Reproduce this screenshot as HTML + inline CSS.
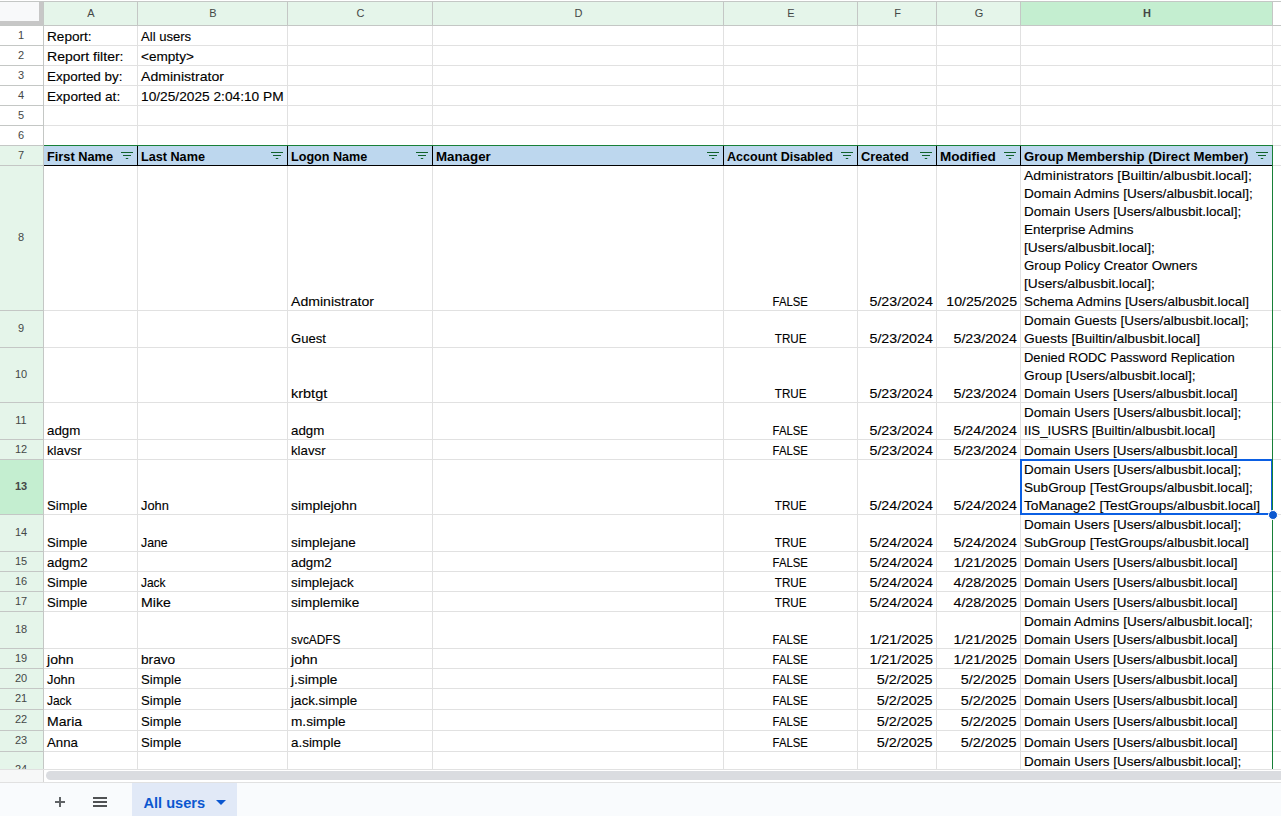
<!DOCTYPE html>
<html><head><meta charset="utf-8"><style>
html,body{margin:0;padding:0;background:#fff;}
body{width:1281px;height:816px;position:relative;overflow:hidden;font-family:"Liberation Sans", sans-serif;}
body>div{position:absolute;}
.t{font-size:13px;line-height:18px;height:18px;white-space:pre;color:#000;-webkit-text-stroke:0.12px #000;}
span{display:inline-block;}
.h{font-size:11px;line-height:18px;height:18px;white-space:pre;color:#444746;}
.tab{font-size:14.6px;font-weight:bold;color:#0b57d0;line-height:18px;white-space:pre;}
</style></head><body>
<div style="left:0px;top:1px;width:1281px;height:1px;background:#c4c7c5;"></div>
<div style="left:44px;top:2px;width:1228px;height:23px;background:#e5f5ea;"></div>
<div style="left:1021px;top:2px;width:251px;height:23px;background:#c4eed0;"></div>
<div style="left:0px;top:2px;width:39px;height:19px;background:#f8f9fa;"></div>
<div style="left:39px;top:2px;width:4px;height:23px;background:#c7c7c7;"></div>
<div style="left:0px;top:21px;width:43px;height:4px;background:#c7c7c7;"></div>
<div style="left:0px;top:25px;width:1281px;height:1px;background:#c4c7c5;"></div>
<div style="left:0px;top:146px;width:43px;height:623px;background:#e5f5ea;"></div>
<div style="left:0px;top:460px;width:43px;height:54px;background:#c4eed0;"></div>
<div style="left:0px;top:45px;width:43px;height:1px;background:#c4c7c5;"></div>
<div style="left:44px;top:45px;width:1237px;height:1px;background:#e1e1e1;"></div>
<div style="left:0px;top:65px;width:43px;height:1px;background:#c4c7c5;"></div>
<div style="left:44px;top:65px;width:1237px;height:1px;background:#e1e1e1;"></div>
<div style="left:0px;top:85px;width:43px;height:1px;background:#c4c7c5;"></div>
<div style="left:44px;top:85px;width:1237px;height:1px;background:#e1e1e1;"></div>
<div style="left:0px;top:105px;width:43px;height:1px;background:#c4c7c5;"></div>
<div style="left:44px;top:105px;width:1237px;height:1px;background:#e1e1e1;"></div>
<div style="left:0px;top:125px;width:43px;height:1px;background:#c4c7c5;"></div>
<div style="left:44px;top:125px;width:1237px;height:1px;background:#e1e1e1;"></div>
<div style="left:0px;top:145px;width:43px;height:1px;background:#c4c7c5;"></div>
<div style="left:44px;top:145px;width:1237px;height:1px;background:#e1e1e1;"></div>
<div style="left:0px;top:165px;width:43px;height:1px;background:#c4c7c5;"></div>
<div style="left:44px;top:165px;width:1237px;height:1px;background:#e1e1e1;"></div>
<div style="left:0px;top:310px;width:43px;height:1px;background:#c4c7c5;"></div>
<div style="left:44px;top:310px;width:1237px;height:1px;background:#e1e1e1;"></div>
<div style="left:0px;top:347px;width:43px;height:1px;background:#c4c7c5;"></div>
<div style="left:44px;top:347px;width:1237px;height:1px;background:#e1e1e1;"></div>
<div style="left:0px;top:402px;width:43px;height:1px;background:#c4c7c5;"></div>
<div style="left:44px;top:402px;width:1237px;height:1px;background:#e1e1e1;"></div>
<div style="left:0px;top:439px;width:43px;height:1px;background:#c4c7c5;"></div>
<div style="left:44px;top:439px;width:1237px;height:1px;background:#e1e1e1;"></div>
<div style="left:0px;top:459px;width:43px;height:1px;background:#c4c7c5;"></div>
<div style="left:44px;top:459px;width:1237px;height:1px;background:#e1e1e1;"></div>
<div style="left:0px;top:514px;width:43px;height:1px;background:#c4c7c5;"></div>
<div style="left:44px;top:514px;width:1237px;height:1px;background:#e1e1e1;"></div>
<div style="left:0px;top:551px;width:43px;height:1px;background:#c4c7c5;"></div>
<div style="left:44px;top:551px;width:1237px;height:1px;background:#e1e1e1;"></div>
<div style="left:0px;top:571px;width:43px;height:1px;background:#c4c7c5;"></div>
<div style="left:44px;top:571px;width:1237px;height:1px;background:#e1e1e1;"></div>
<div style="left:0px;top:591px;width:43px;height:1px;background:#c4c7c5;"></div>
<div style="left:44px;top:591px;width:1237px;height:1px;background:#e1e1e1;"></div>
<div style="left:0px;top:611px;width:43px;height:1px;background:#c4c7c5;"></div>
<div style="left:44px;top:611px;width:1237px;height:1px;background:#e1e1e1;"></div>
<div style="left:0px;top:648px;width:43px;height:1px;background:#c4c7c5;"></div>
<div style="left:44px;top:648px;width:1237px;height:1px;background:#e1e1e1;"></div>
<div style="left:0px;top:668px;width:43px;height:1px;background:#c4c7c5;"></div>
<div style="left:44px;top:668px;width:1237px;height:1px;background:#e1e1e1;"></div>
<div style="left:0px;top:688px;width:43px;height:1px;background:#c4c7c5;"></div>
<div style="left:44px;top:688px;width:1237px;height:1px;background:#e1e1e1;"></div>
<div style="left:0px;top:709px;width:43px;height:1px;background:#c4c7c5;"></div>
<div style="left:44px;top:709px;width:1237px;height:1px;background:#e1e1e1;"></div>
<div style="left:0px;top:730px;width:43px;height:1px;background:#c4c7c5;"></div>
<div style="left:44px;top:730px;width:1237px;height:1px;background:#e1e1e1;"></div>
<div style="left:0px;top:751px;width:43px;height:1px;background:#c4c7c5;"></div>
<div style="left:44px;top:751px;width:1237px;height:1px;background:#e1e1e1;"></div>
<div style="left:43px;top:2px;width:1px;height:767px;background:#c4c7c5;"></div>
<div style="left:137px;top:2px;width:1px;height:23px;background:#c4c7c5;"></div>
<div style="left:137px;top:26px;width:1px;height:743px;background:#e1e1e1;"></div>
<div style="left:287px;top:2px;width:1px;height:23px;background:#c4c7c5;"></div>
<div style="left:287px;top:26px;width:1px;height:743px;background:#e1e1e1;"></div>
<div style="left:432px;top:2px;width:1px;height:23px;background:#c4c7c5;"></div>
<div style="left:432px;top:26px;width:1px;height:743px;background:#e1e1e1;"></div>
<div style="left:723px;top:2px;width:1px;height:23px;background:#c4c7c5;"></div>
<div style="left:723px;top:26px;width:1px;height:743px;background:#e1e1e1;"></div>
<div style="left:857px;top:2px;width:1px;height:23px;background:#c4c7c5;"></div>
<div style="left:857px;top:26px;width:1px;height:743px;background:#e1e1e1;"></div>
<div style="left:936px;top:2px;width:1px;height:23px;background:#c4c7c5;"></div>
<div style="left:936px;top:26px;width:1px;height:743px;background:#e1e1e1;"></div>
<div style="left:1020px;top:2px;width:1px;height:23px;background:#c4c7c5;"></div>
<div style="left:1020px;top:26px;width:1px;height:743px;background:#e1e1e1;"></div>
<div style="left:1272px;top:2px;width:1px;height:23px;background:#c4c7c5;"></div>
<div style="left:1272px;top:26px;width:1px;height:743px;background:#e1e1e1;"></div>
<div style="left:0px;top:769px;width:1281px;height:1px;background:#e1e1e1;"></div>
<div style="left:44px;top:146px;width:1228px;height:19px;background:#bdd7ee;"></div>
<div style="left:44px;top:145px;width:1229px;height:1px;background:#188038;"></div>
<div style="left:44px;top:165px;width:1229px;height:1px;background:#000;"></div>
<div style="left:137px;top:146px;width:1px;height:19px;background:#000;"></div>
<div style="left:287px;top:146px;width:1px;height:19px;background:#000;"></div>
<div style="left:432px;top:146px;width:1px;height:19px;background:#000;"></div>
<div style="left:723px;top:146px;width:1px;height:19px;background:#000;"></div>
<div style="left:857px;top:146px;width:1px;height:19px;background:#000;"></div>
<div style="left:936px;top:146px;width:1px;height:19px;background:#000;"></div>
<div style="left:1020px;top:146px;width:1px;height:19px;background:#000;"></div>
<svg style="position:absolute;left:121px;top:151px" width="12" height="9" viewBox="0 0 12 9"><path d="M0 1.5h12M2 4.5h8M4.8 7.5h2.4" stroke="#11612b" stroke-width="1.2"/></svg>
<svg style="position:absolute;left:271px;top:151px" width="12" height="9" viewBox="0 0 12 9"><path d="M0 1.5h12M2 4.5h8M4.8 7.5h2.4" stroke="#11612b" stroke-width="1.2"/></svg>
<svg style="position:absolute;left:416px;top:151px" width="12" height="9" viewBox="0 0 12 9"><path d="M0 1.5h12M2 4.5h8M4.8 7.5h2.4" stroke="#11612b" stroke-width="1.2"/></svg>
<svg style="position:absolute;left:707px;top:151px" width="12" height="9" viewBox="0 0 12 9"><path d="M0 1.5h12M2 4.5h8M4.8 7.5h2.4" stroke="#11612b" stroke-width="1.2"/></svg>
<svg style="position:absolute;left:841px;top:151px" width="12" height="9" viewBox="0 0 12 9"><path d="M0 1.5h12M2 4.5h8M4.8 7.5h2.4" stroke="#11612b" stroke-width="1.2"/></svg>
<svg style="position:absolute;left:920px;top:151px" width="12" height="9" viewBox="0 0 12 9"><path d="M0 1.5h12M2 4.5h8M4.8 7.5h2.4" stroke="#11612b" stroke-width="1.2"/></svg>
<svg style="position:absolute;left:1004px;top:151px" width="12" height="9" viewBox="0 0 12 9"><path d="M0 1.5h12M2 4.5h8M4.8 7.5h2.4" stroke="#11612b" stroke-width="1.2"/></svg>
<svg style="position:absolute;left:1256px;top:151px" width="12" height="9" viewBox="0 0 12 9"><path d="M0 1.5h12M2 4.5h8M4.8 7.5h2.4" stroke="#11612b" stroke-width="1.2"/></svg>
<div style="left:1020px;top:459px;width:253px;height:56px;box-sizing:border-box;border:2px solid #0b5fe3;background:transparent"></div>
<div style="left:1272px;top:145px;width:1px;height:624px;background:#188038;"></div>
<div style="left:1268px;top:510px;width:10px;height:10px;border-radius:50%;background:#0b57d0;border:1px solid #fff;box-sizing:border-box"></div>
<div style="left:0;top:752px;width:43px;height:17px;overflow:hidden"><div class="h" style="position:absolute;left:-279px;top:7.5px;width:600px;text-align:center">24</div></div>
<div style="left:0px;top:770px;width:43px;height:12px;background:#f7f8f8;"></div>
<div style="left:43px;top:770px;width:1px;height:12px;background:#d5d5d5;"></div>
<div style="left:44px;top:770px;width:1237px;height:12px;background:#fff;"></div>
<div style="left:46px;top:771px;width:1300px;height:9px;border-radius:5px;background:#dadce0"></div>
<div style="left:0px;top:782px;width:1281px;height:1px;background:#e1e1e1;"></div>
<div style="left:0px;top:783px;width:1281px;height:33px;background:#f9fbfd;"></div>
<div style="left:55px;top:801px;width:10px;height:2px;background:#606366;"></div>
<div style="left:59px;top:797px;width:2px;height:10px;background:#606366;"></div>
<div style="left:93px;top:797px;width:14px;height:2px;background:#505254;"></div>
<div style="left:93px;top:801px;width:14px;height:2px;background:#505254;"></div>
<div style="left:93px;top:805px;width:14px;height:2px;background:#505254;"></div>
<div style="left:132px;top:783px;width:105px;height:33px;background:#e1e9f7;"></div>
<div class="tab" style="left:143.5px;top:793.5px;">All users</div>
<svg style="position:absolute;left:216px;top:800px" width="10" height="5" viewBox="0 0 10 5"><path d="M0 0h10L5 5z" fill="#0b57d0"/></svg>
<div class="h" style="left:-209.00px;top:4px;width:600px;text-align:center;color:#444746;">A</div>
<div class="h" style="left:-87.00px;top:4px;width:600px;text-align:center;color:#444746;">B</div>
<div class="h" style="left:60.50px;top:4px;width:600px;text-align:center;color:#444746;">C</div>
<div class="h" style="left:278.50px;top:4px;width:600px;text-align:center;color:#444746;">D</div>
<div class="h" style="left:491.00px;top:4px;width:600px;text-align:center;color:#444746;">E</div>
<div class="h" style="left:597.50px;top:4px;width:600px;text-align:center;color:#444746;">F</div>
<div class="h" style="left:679.00px;top:4px;width:600px;text-align:center;color:#444746;">G</div>
<div class="h" style="left:847.00px;top:4px;width:600px;text-align:center;font-weight:bold;-webkit-text-stroke:0;color:#444746;">H</div>
<div class="h" style="left:-279.00px;top:25.5px;width:600px;text-align:center;color:#444746;">1</div>
<div class="h" style="left:-279.00px;top:45.5px;width:600px;text-align:center;color:#444746;">2</div>
<div class="h" style="left:-279.00px;top:65.5px;width:600px;text-align:center;color:#444746;">3</div>
<div class="h" style="left:-279.00px;top:85.5px;width:600px;text-align:center;color:#444746;">4</div>
<div class="h" style="left:-279.00px;top:105.5px;width:600px;text-align:center;color:#444746;">5</div>
<div class="h" style="left:-279.00px;top:125.5px;width:600px;text-align:center;color:#444746;">6</div>
<div class="h" style="left:-279.00px;top:145.5px;width:600px;text-align:center;color:#444746;">7</div>
<div class="h" style="left:-279.00px;top:228.0px;width:600px;text-align:center;color:#444746;">8</div>
<div class="h" style="left:-279.00px;top:319.0px;width:600px;text-align:center;color:#444746;">9</div>
<div class="h" style="left:-279.00px;top:365.0px;width:600px;text-align:center;color:#444746;">10</div>
<div class="h" style="left:-279.00px;top:411.0px;width:600px;text-align:center;color:#444746;">11</div>
<div class="h" style="left:-279.00px;top:439.5px;width:600px;text-align:center;color:#444746;">12</div>
<div class="h" style="left:-279.00px;top:477.0px;width:600px;text-align:center;font-weight:bold;-webkit-text-stroke:0;color:#444746;">13</div>
<div class="h" style="left:-279.00px;top:523.0px;width:600px;text-align:center;color:#444746;">14</div>
<div class="h" style="left:-279.00px;top:551.5px;width:600px;text-align:center;color:#444746;">15</div>
<div class="h" style="left:-279.00px;top:571.5px;width:600px;text-align:center;color:#444746;">16</div>
<div class="h" style="left:-279.00px;top:591.5px;width:600px;text-align:center;color:#444746;">17</div>
<div class="h" style="left:-279.00px;top:620.0px;width:600px;text-align:center;color:#444746;">18</div>
<div class="h" style="left:-279.00px;top:648.5px;width:600px;text-align:center;color:#444746;">19</div>
<div class="h" style="left:-279.00px;top:668.5px;width:600px;text-align:center;color:#444746;">20</div>
<div class="h" style="left:-279.00px;top:689.0px;width:600px;text-align:center;color:#444746;">21</div>
<div class="h" style="left:-279.00px;top:710.0px;width:600px;text-align:center;color:#444746;">22</div>
<div class="h" style="left:-279.00px;top:731.0px;width:600px;text-align:center;color:#444746;">23</div>
<div class="t" style="left:47.00px;top:148px;width:600px;text-align:left;font-weight:bold;-webkit-text-stroke:0;"><span style="transform:scaleX(0.9823);transform-origin:left">First Name</span></div>
<div class="t" style="left:141.00px;top:148px;width:600px;text-align:left;font-weight:bold;-webkit-text-stroke:0;"><span style="transform:scaleX(0.9721);transform-origin:left">Last Name</span></div>
<div class="t" style="left:291.00px;top:148px;width:600px;text-align:left;font-weight:bold;-webkit-text-stroke:0;"><span style="transform:scaleX(0.9696);transform-origin:left">Logon Name</span></div>
<div class="t" style="left:436.00px;top:148px;width:600px;text-align:left;font-weight:bold;-webkit-text-stroke:0;"><span style="transform:scaleX(1.0234);transform-origin:left">Manager</span></div>
<div class="t" style="left:727.00px;top:148px;width:600px;text-align:left;font-weight:bold;-webkit-text-stroke:0;"><span style="transform:scaleX(0.9643);transform-origin:left">Account Disabled</span></div>
<div class="t" style="left:861.00px;top:148px;width:600px;text-align:left;font-weight:bold;-webkit-text-stroke:0;"><span style="transform:scaleX(0.9899);transform-origin:left">Created</span></div>
<div class="t" style="left:940.00px;top:148px;width:600px;text-align:left;font-weight:bold;-webkit-text-stroke:0;"><span style="transform:scaleX(1.0422);transform-origin:left">Modified</span></div>
<div class="t" style="left:1024.00px;top:148px;width:600px;text-align:left;font-weight:bold;-webkit-text-stroke:0;"><span style="transform:scaleX(1.0115);transform-origin:left">Group Membership (Direct Member)</span></div>
<div class="t" style="left:47.00px;top:28px;width:600px;text-align:left;"><span style="transform:scaleX(1.0474);transform-origin:left">Report:</span></div>
<div class="t" style="left:141.00px;top:28px;width:600px;text-align:left;"><span style="transform:scaleX(1.0058);transform-origin:left">All users</span></div>
<div class="t" style="left:47.00px;top:48px;width:600px;text-align:left;"><span style="transform:scaleX(1.0808);transform-origin:left">Report filter:</span></div>
<div class="t" style="left:141.00px;top:48px;width:600px;text-align:left;"><span style="transform:scaleX(1.0454);transform-origin:left">&lt;empty&gt;</span></div>
<div class="t" style="left:47.00px;top:68px;width:600px;text-align:left;"><span style="transform:scaleX(1.0351);transform-origin:left">Exported by:</span></div>
<div class="t" style="left:141.00px;top:68px;width:600px;text-align:left;"><span style="transform:scaleX(1.0827);transform-origin:left">Administrator</span></div>
<div class="t" style="left:47.00px;top:88px;width:600px;text-align:left;"><span style="transform:scaleX(1.0435);transform-origin:left">Exported at:</span></div>
<div class="t" style="left:141.00px;top:88px;width:600px;text-align:left;"><span style="transform:scaleX(1.0550);transform-origin:left">10/25/2025 2:04:10 PM</span></div>
<div class="t" style="left:291.00px;top:293px;width:600px;text-align:left;"><span style="transform:scaleX(1.0827);transform-origin:left">Administrator</span></div>
<div class="t" style="left:490.50px;top:293px;width:600px;text-align:center;"><span style="transform:scaleX(0.8716);transform-origin:center">FALSE</span></div>
<div class="t" style="left:333.00px;top:293px;width:600px;text-align:right;"><span style="transform:scaleX(1.0956);transform-origin:right">5/23/2024</span></div>
<div class="t" style="left:417.00px;top:293px;width:600px;text-align:right;"><span style="transform:scaleX(1.0881);transform-origin:right">10/25/2025</span></div>
<div class="t" style="left:1024.00px;top:167px;width:600px;text-align:left;"><span style="transform:scaleX(1.0765);transform-origin:left">Administrators [Builtin/albusbit.local];</span></div>
<div class="t" style="left:1024.00px;top:185px;width:600px;text-align:left;"><span style="transform:scaleX(1.0483);transform-origin:left">Domain Admins [Users/albusbit.local];</span></div>
<div class="t" style="left:1024.00px;top:203px;width:600px;text-align:left;"><span style="transform:scaleX(1.0372);transform-origin:left">Domain Users [Users/albusbit.local];</span></div>
<div class="t" style="left:1024.00px;top:221px;width:600px;text-align:left;"><span style="transform:scaleX(1.0375);transform-origin:left">Enterprise Admins</span></div>
<div class="t" style="left:1024.00px;top:239px;width:600px;text-align:left;"><span style="transform:scaleX(1.0588);transform-origin:left">[Users/albusbit.local];</span></div>
<div class="t" style="left:1024.00px;top:257px;width:600px;text-align:left;"><span style="transform:scaleX(1.0215);transform-origin:left">Group Policy Creator Owners</span></div>
<div class="t" style="left:1024.00px;top:275px;width:600px;text-align:left;"><span style="transform:scaleX(1.0588);transform-origin:left">[Users/albusbit.local];</span></div>
<div class="t" style="left:1024.00px;top:293px;width:600px;text-align:left;"><span style="transform:scaleX(1.0342);transform-origin:left">Schema Admins [Users/albusbit.local]</span></div>
<div class="t" style="left:291.00px;top:330px;width:600px;text-align:left;"><span style="transform:scaleX(1.0063);transform-origin:left">Guest</span></div>
<div class="t" style="left:490.50px;top:330px;width:600px;text-align:center;"><span style="transform:scaleX(0.8952);transform-origin:center">TRUE</span></div>
<div class="t" style="left:333.00px;top:330px;width:600px;text-align:right;"><span style="transform:scaleX(1.0956);transform-origin:right">5/23/2024</span></div>
<div class="t" style="left:417.00px;top:330px;width:600px;text-align:right;"><span style="transform:scaleX(1.0956);transform-origin:right">5/23/2024</span></div>
<div class="t" style="left:1024.00px;top:312px;width:600px;text-align:left;"><span style="transform:scaleX(1.0365);transform-origin:left">Domain Guests [Users/albusbit.local];</span></div>
<div class="t" style="left:1024.00px;top:330px;width:600px;text-align:left;"><span style="transform:scaleX(1.0587);transform-origin:left">Guests [Builtin/albusbit.local]</span></div>
<div class="t" style="left:291.00px;top:385px;width:600px;text-align:left;"><span style="transform:scaleX(1.1142);transform-origin:left">krbtgt</span></div>
<div class="t" style="left:490.50px;top:385px;width:600px;text-align:center;"><span style="transform:scaleX(0.8952);transform-origin:center">TRUE</span></div>
<div class="t" style="left:333.00px;top:385px;width:600px;text-align:right;"><span style="transform:scaleX(1.0956);transform-origin:right">5/23/2024</span></div>
<div class="t" style="left:417.00px;top:385px;width:600px;text-align:right;"><span style="transform:scaleX(1.0956);transform-origin:right">5/23/2024</span></div>
<div class="t" style="left:1024.00px;top:349px;width:600px;text-align:left;"><span style="transform:scaleX(0.9949);transform-origin:left">Denied RODC Password Replication</span></div>
<div class="t" style="left:1024.00px;top:367px;width:600px;text-align:left;"><span style="transform:scaleX(1.0511);transform-origin:left">Group [Users/albusbit.local];</span></div>
<div class="t" style="left:1024.00px;top:385px;width:600px;text-align:left;"><span style="transform:scaleX(1.0364);transform-origin:left">Domain Users [Users/albusbit.local]</span></div>
<div class="t" style="left:47.00px;top:422px;width:600px;text-align:left;"><span style="transform:scaleX(1.0253);transform-origin:left">adgm</span></div>
<div class="t" style="left:291.00px;top:422px;width:600px;text-align:left;"><span style="transform:scaleX(1.0253);transform-origin:left">adgm</span></div>
<div class="t" style="left:490.50px;top:422px;width:600px;text-align:center;"><span style="transform:scaleX(0.8716);transform-origin:center">FALSE</span></div>
<div class="t" style="left:333.00px;top:422px;width:600px;text-align:right;"><span style="transform:scaleX(1.0956);transform-origin:right">5/23/2024</span></div>
<div class="t" style="left:417.00px;top:422px;width:600px;text-align:right;"><span style="transform:scaleX(1.0956);transform-origin:right">5/24/2024</span></div>
<div class="t" style="left:1024.00px;top:404px;width:600px;text-align:left;"><span style="transform:scaleX(1.0372);transform-origin:left">Domain Users [Users/albusbit.local];</span></div>
<div class="t" style="left:1024.00px;top:422px;width:600px;text-align:left;"><span style="transform:scaleX(1.0182);transform-origin:left">IIS_IUSRS [Builtin/albusbit.local]</span></div>
<div class="t" style="left:47.00px;top:442px;width:600px;text-align:left;"><span style="transform:scaleX(1.0177);transform-origin:left">klavsr</span></div>
<div class="t" style="left:291.00px;top:442px;width:600px;text-align:left;"><span style="transform:scaleX(1.0177);transform-origin:left">klavsr</span></div>
<div class="t" style="left:490.50px;top:442px;width:600px;text-align:center;"><span style="transform:scaleX(0.8716);transform-origin:center">FALSE</span></div>
<div class="t" style="left:333.00px;top:442px;width:600px;text-align:right;"><span style="transform:scaleX(1.0956);transform-origin:right">5/23/2024</span></div>
<div class="t" style="left:417.00px;top:442px;width:600px;text-align:right;"><span style="transform:scaleX(1.0956);transform-origin:right">5/23/2024</span></div>
<div class="t" style="left:1024.00px;top:442px;width:600px;text-align:left;"><span style="transform:scaleX(1.0364);transform-origin:left">Domain Users [Users/albusbit.local]</span></div>
<div class="t" style="left:47.00px;top:497px;width:600px;text-align:left;"><span style="transform:scaleX(1.0114);transform-origin:left">Simple</span></div>
<div class="t" style="left:141.00px;top:497px;width:600px;text-align:left;"><span style="transform:scaleX(0.9860);transform-origin:left">John</span></div>
<div class="t" style="left:291.00px;top:497px;width:600px;text-align:left;"><span style="transform:scaleX(1.0593);transform-origin:left">simplejohn</span></div>
<div class="t" style="left:490.50px;top:497px;width:600px;text-align:center;"><span style="transform:scaleX(0.8952);transform-origin:center">TRUE</span></div>
<div class="t" style="left:333.00px;top:497px;width:600px;text-align:right;"><span style="transform:scaleX(1.0956);transform-origin:right">5/24/2024</span></div>
<div class="t" style="left:417.00px;top:497px;width:600px;text-align:right;"><span style="transform:scaleX(1.0956);transform-origin:right">5/24/2024</span></div>
<div class="t" style="left:1024.00px;top:461px;width:600px;text-align:left;"><span style="transform:scaleX(1.0372);transform-origin:left">Domain Users [Users/albusbit.local];</span></div>
<div class="t" style="left:1024.00px;top:479px;width:600px;text-align:left;"><span style="transform:scaleX(1.0450);transform-origin:left">SubGroup [TestGroups/albusbit.local];</span></div>
<div class="t" style="left:1024.00px;top:497px;width:600px;text-align:left;"><span style="transform:scaleX(1.0537);transform-origin:left">ToManage2 [TestGroups/albusbit.local]</span></div>
<div class="t" style="left:47.00px;top:534px;width:600px;text-align:left;"><span style="transform:scaleX(1.0114);transform-origin:left">Simple</span></div>
<div class="t" style="left:141.00px;top:534px;width:600px;text-align:left;"><span style="transform:scaleX(0.9470);transform-origin:left">Jane</span></div>
<div class="t" style="left:291.00px;top:534px;width:600px;text-align:left;"><span style="transform:scaleX(1.0416);transform-origin:left">simplejane</span></div>
<div class="t" style="left:490.50px;top:534px;width:600px;text-align:center;"><span style="transform:scaleX(0.8952);transform-origin:center">TRUE</span></div>
<div class="t" style="left:333.00px;top:534px;width:600px;text-align:right;"><span style="transform:scaleX(1.0956);transform-origin:right">5/24/2024</span></div>
<div class="t" style="left:417.00px;top:534px;width:600px;text-align:right;"><span style="transform:scaleX(1.0956);transform-origin:right">5/24/2024</span></div>
<div class="t" style="left:1024.00px;top:516px;width:600px;text-align:left;"><span style="transform:scaleX(1.0372);transform-origin:left">Domain Users [Users/albusbit.local];</span></div>
<div class="t" style="left:1024.00px;top:534px;width:600px;text-align:left;"><span style="transform:scaleX(1.0443);transform-origin:left">SubGroup [TestGroups/albusbit.local]</span></div>
<div class="t" style="left:47.00px;top:554px;width:600px;text-align:left;"><span style="transform:scaleX(1.0261);transform-origin:left">adgm2</span></div>
<div class="t" style="left:291.00px;top:554px;width:600px;text-align:left;"><span style="transform:scaleX(1.0261);transform-origin:left">adgm2</span></div>
<div class="t" style="left:490.50px;top:554px;width:600px;text-align:center;"><span style="transform:scaleX(0.8716);transform-origin:center">FALSE</span></div>
<div class="t" style="left:333.00px;top:554px;width:600px;text-align:right;"><span style="transform:scaleX(1.0956);transform-origin:right">5/24/2024</span></div>
<div class="t" style="left:417.00px;top:554px;width:600px;text-align:right;"><span style="transform:scaleX(1.0956);transform-origin:right">1/21/2025</span></div>
<div class="t" style="left:1024.00px;top:554px;width:600px;text-align:left;"><span style="transform:scaleX(1.0364);transform-origin:left">Domain Users [Users/albusbit.local]</span></div>
<div class="t" style="left:47.00px;top:574px;width:600px;text-align:left;"><span style="transform:scaleX(1.0114);transform-origin:left">Simple</span></div>
<div class="t" style="left:141.00px;top:574px;width:600px;text-align:left;"><span style="transform:scaleX(0.9195);transform-origin:left">Jack</span></div>
<div class="t" style="left:291.00px;top:574px;width:600px;text-align:left;"><span style="transform:scaleX(1.0317);transform-origin:left">simplejack</span></div>
<div class="t" style="left:490.50px;top:574px;width:600px;text-align:center;"><span style="transform:scaleX(0.8952);transform-origin:center">TRUE</span></div>
<div class="t" style="left:333.00px;top:574px;width:600px;text-align:right;"><span style="transform:scaleX(1.0956);transform-origin:right">5/24/2024</span></div>
<div class="t" style="left:417.00px;top:574px;width:600px;text-align:right;"><span style="transform:scaleX(1.0956);transform-origin:right">4/28/2025</span></div>
<div class="t" style="left:1024.00px;top:574px;width:600px;text-align:left;"><span style="transform:scaleX(1.0364);transform-origin:left">Domain Users [Users/albusbit.local]</span></div>
<div class="t" style="left:47.00px;top:594px;width:600px;text-align:left;"><span style="transform:scaleX(1.0114);transform-origin:left">Simple</span></div>
<div class="t" style="left:141.00px;top:594px;width:600px;text-align:left;"><span style="transform:scaleX(1.0888);transform-origin:left">Mike</span></div>
<div class="t" style="left:291.00px;top:594px;width:600px;text-align:left;"><span style="transform:scaleX(1.0501);transform-origin:left">simplemike</span></div>
<div class="t" style="left:490.50px;top:594px;width:600px;text-align:center;"><span style="transform:scaleX(0.8952);transform-origin:center">TRUE</span></div>
<div class="t" style="left:333.00px;top:594px;width:600px;text-align:right;"><span style="transform:scaleX(1.0956);transform-origin:right">5/24/2024</span></div>
<div class="t" style="left:417.00px;top:594px;width:600px;text-align:right;"><span style="transform:scaleX(1.0956);transform-origin:right">4/28/2025</span></div>
<div class="t" style="left:1024.00px;top:594px;width:600px;text-align:left;"><span style="transform:scaleX(1.0364);transform-origin:left">Domain Users [Users/albusbit.local]</span></div>
<div class="t" style="left:291.00px;top:631px;width:600px;text-align:left;"><span style="transform:scaleX(0.9146);transform-origin:left">svcADFS</span></div>
<div class="t" style="left:490.50px;top:631px;width:600px;text-align:center;"><span style="transform:scaleX(0.8716);transform-origin:center">FALSE</span></div>
<div class="t" style="left:333.00px;top:631px;width:600px;text-align:right;"><span style="transform:scaleX(1.0956);transform-origin:right">1/21/2025</span></div>
<div class="t" style="left:417.00px;top:631px;width:600px;text-align:right;"><span style="transform:scaleX(1.0956);transform-origin:right">1/21/2025</span></div>
<div class="t" style="left:1024.00px;top:613px;width:600px;text-align:left;"><span style="transform:scaleX(1.0483);transform-origin:left">Domain Admins [Users/albusbit.local];</span></div>
<div class="t" style="left:1024.00px;top:631px;width:600px;text-align:left;"><span style="transform:scaleX(1.0364);transform-origin:left">Domain Users [Users/albusbit.local]</span></div>
<div class="t" style="left:47.00px;top:651px;width:600px;text-align:left;"><span style="transform:scaleX(1.0837);transform-origin:left">john</span></div>
<div class="t" style="left:141.00px;top:651px;width:600px;text-align:left;"><span style="transform:scaleX(1.0514);transform-origin:left">bravo</span></div>
<div class="t" style="left:291.00px;top:651px;width:600px;text-align:left;"><span style="transform:scaleX(1.0837);transform-origin:left">john</span></div>
<div class="t" style="left:490.50px;top:651px;width:600px;text-align:center;"><span style="transform:scaleX(0.8716);transform-origin:center">FALSE</span></div>
<div class="t" style="left:333.00px;top:651px;width:600px;text-align:right;"><span style="transform:scaleX(1.0956);transform-origin:right">1/21/2025</span></div>
<div class="t" style="left:417.00px;top:651px;width:600px;text-align:right;"><span style="transform:scaleX(1.0956);transform-origin:right">1/21/2025</span></div>
<div class="t" style="left:1024.00px;top:651px;width:600px;text-align:left;"><span style="transform:scaleX(1.0364);transform-origin:left">Domain Users [Users/albusbit.local]</span></div>
<div class="t" style="left:47.00px;top:671px;width:600px;text-align:left;"><span style="transform:scaleX(0.9860);transform-origin:left">John</span></div>
<div class="t" style="left:141.00px;top:671px;width:600px;text-align:left;"><span style="transform:scaleX(1.0114);transform-origin:left">Simple</span></div>
<div class="t" style="left:291.00px;top:671px;width:600px;text-align:left;"><span style="transform:scaleX(1.0528);transform-origin:left">j.simple</span></div>
<div class="t" style="left:490.50px;top:671px;width:600px;text-align:center;"><span style="transform:scaleX(0.8716);transform-origin:center">FALSE</span></div>
<div class="t" style="left:333.00px;top:671px;width:600px;text-align:right;"><span style="transform:scaleX(1.1053);transform-origin:right">5/2/2025</span></div>
<div class="t" style="left:417.00px;top:671px;width:600px;text-align:right;"><span style="transform:scaleX(1.1053);transform-origin:right">5/2/2025</span></div>
<div class="t" style="left:1024.00px;top:671px;width:600px;text-align:left;"><span style="transform:scaleX(1.0364);transform-origin:left">Domain Users [Users/albusbit.local]</span></div>
<div class="t" style="left:47.00px;top:692px;width:600px;text-align:left;"><span style="transform:scaleX(0.9195);transform-origin:left">Jack</span></div>
<div class="t" style="left:141.00px;top:692px;width:600px;text-align:left;"><span style="transform:scaleX(1.0114);transform-origin:left">Simple</span></div>
<div class="t" style="left:291.00px;top:692px;width:600px;text-align:left;"><span style="transform:scaleX(1.0313);transform-origin:left">jack.simple</span></div>
<div class="t" style="left:490.50px;top:692px;width:600px;text-align:center;"><span style="transform:scaleX(0.8716);transform-origin:center">FALSE</span></div>
<div class="t" style="left:333.00px;top:692px;width:600px;text-align:right;"><span style="transform:scaleX(1.1053);transform-origin:right">5/2/2025</span></div>
<div class="t" style="left:417.00px;top:692px;width:600px;text-align:right;"><span style="transform:scaleX(1.1053);transform-origin:right">5/2/2025</span></div>
<div class="t" style="left:1024.00px;top:692px;width:600px;text-align:left;"><span style="transform:scaleX(1.0364);transform-origin:left">Domain Users [Users/albusbit.local]</span></div>
<div class="t" style="left:47.00px;top:713px;width:600px;text-align:left;"><span style="transform:scaleX(1.0790);transform-origin:left">Maria</span></div>
<div class="t" style="left:141.00px;top:713px;width:600px;text-align:left;"><span style="transform:scaleX(1.0114);transform-origin:left">Simple</span></div>
<div class="t" style="left:291.00px;top:713px;width:600px;text-align:left;"><span style="transform:scaleX(1.0501);transform-origin:left">m.simple</span></div>
<div class="t" style="left:490.50px;top:713px;width:600px;text-align:center;"><span style="transform:scaleX(0.8716);transform-origin:center">FALSE</span></div>
<div class="t" style="left:333.00px;top:713px;width:600px;text-align:right;"><span style="transform:scaleX(1.1053);transform-origin:right">5/2/2025</span></div>
<div class="t" style="left:417.00px;top:713px;width:600px;text-align:right;"><span style="transform:scaleX(1.1053);transform-origin:right">5/2/2025</span></div>
<div class="t" style="left:1024.00px;top:713px;width:600px;text-align:left;"><span style="transform:scaleX(1.0364);transform-origin:left">Domain Users [Users/albusbit.local]</span></div>
<div class="t" style="left:47.00px;top:734px;width:600px;text-align:left;"><span style="transform:scaleX(1.0179);transform-origin:left">Anna</span></div>
<div class="t" style="left:141.00px;top:734px;width:600px;text-align:left;"><span style="transform:scaleX(1.0114);transform-origin:left">Simple</span></div>
<div class="t" style="left:291.00px;top:734px;width:600px;text-align:left;"><span style="transform:scaleX(1.0311);transform-origin:left">a.simple</span></div>
<div class="t" style="left:490.50px;top:734px;width:600px;text-align:center;"><span style="transform:scaleX(0.8716);transform-origin:center">FALSE</span></div>
<div class="t" style="left:333.00px;top:734px;width:600px;text-align:right;"><span style="transform:scaleX(1.1053);transform-origin:right">5/2/2025</span></div>
<div class="t" style="left:417.00px;top:734px;width:600px;text-align:right;"><span style="transform:scaleX(1.1053);transform-origin:right">5/2/2025</span></div>
<div class="t" style="left:1024.00px;top:734px;width:600px;text-align:left;"><span style="transform:scaleX(1.0364);transform-origin:left">Domain Users [Users/albusbit.local]</span></div>
<div class="t" style="left:1024.00px;top:753px;width:600px;text-align:left;"><span style="transform:scaleX(1.0372);transform-origin:left">Domain Users [Users/albusbit.local];</span></div>
</body></html>
